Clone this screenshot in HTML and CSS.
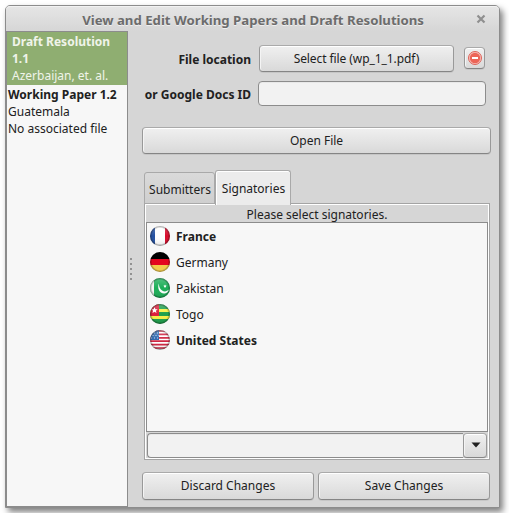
FILE: index.html
```html
<!DOCTYPE html>
<html lang="en">
<head>
<meta charset="utf-8">
<title>View and Edit Working Papers and Draft Resolutions</title>
<link rel="stylesheet" href="styles.css">
</head>
<body>
<div class="window">
  <header class="titlebar">
    <h1>View and Edit Working Papers and Draft Resolutions</h1>
    <svg class="close" viewBox="0 0 10 10"><path d="M1.5 1.5l7 7M8.5 1.5l-7 7"/></svg>
  </header>
  <div class="content">
    <aside class="papers">
      <div class="paper selected"><b>Draft Resolution<br>1.1</b><br>Azerbaijan, et. al.</div>
      <div class="paper"><b>Working Paper 1.2</b><br>Guatemala<br>No associated file</div>
    </aside>
    <div class="handle"><i></i><i></i><i></i><i></i><i></i></div>
    <main class="editor">
      <div class="row file-row">
        <label>File location</label>
        <button class="btn file-btn">Select file (wp_1_1.pdf)</button>
        <button class="btn remove-btn"><svg viewBox="0 0 14 14"><circle cx="7" cy="7" r="6.500" fill="#f8c3bd" stroke="#dd6258"/><circle cx="7" cy="7" r="5.200" fill="#ec6558"/><path d="M4 7h6" stroke="#fff" stroke-width="2"/></svg></button>
      </div>
      <div class="row docs-row">
        <label>or Google Docs ID</label>
        <input class="entry docs-entry" type="text">
      </div>
      <button class="btn open-btn">Open File</button>
      <div class="tabs">
        <div class="tab">Submitters</div>
        <div class="tab active">Signatories</div>
      </div>
      <section class="pane">
        <div class="hint">Please select signatories.</div>
        <ul class="countries">
          <li class="strong">
            <svg class="flag" viewBox="0 0 22 22">
              <defs>
                <clipPath id="round"><circle cx="11" cy="11" r="10"/></clipPath>
                <linearGradient id="gloss" x1="0" y1="0" x2="0" y2="1"><stop offset="0" stop-color="#fff" stop-opacity=".25"/><stop offset=".5" stop-color="#fff" stop-opacity="0"/><stop offset="1" stop-color="#000" stop-opacity=".12"/></linearGradient>
                <radialGradient id="rim"><stop offset=".78" stop-color="#000" stop-opacity="0"/><stop offset="1" stop-color="#000" stop-opacity=".4"/></radialGradient>
                <g id="shade"><circle cx="11" cy="11" r="10" fill="url(#gloss)"/><circle cx="11" cy="11" r="10" fill="url(#rim)"/></g>
              </defs>
              <g clip-path="url(#round)"><path fill="#fff" d="M0 0h22v22H0z"/><path fill="#2450a0" d="M0 0h6v22H0z"/><path fill="#d80c2c" d="M16 0h6v22h-6z"/></g><use href="#shade"/>
            </svg>France</li>
          <li>
            <svg class="flag" viewBox="0 0 22 22"><g clip-path="url(#round)"><path d="M0 0h22v8H0z"/><path fill="#e4061f" d="M0 8h22v6H0z"/><path fill="#f2cb4c" d="M0 14h22v8H0z"/></g><circle cx="11" cy="11" r="10" fill="url(#rim)"/></svg>Germany</li>
          <li>
            <svg class="flag" viewBox="0 0 22 22"><g clip-path="url(#round)"><path fill="#1cae57" d="M0 0h22v22H0z"/><path fill="#f4f6f4" d="M0 0h5v22H0z"/><path d="M10 6.500C7.800 10.500 10.500 17 15.500 16.600c2.500-.2 4-1.800 4.400-4-2 2-4.600 2.400-6.800.9-2.200-1.500-3.300-4-3.100-7z" fill="#fff"/><path d="m16 7.500.5 1.100 1.200.1-.9.800.3 1.200-1.100-.6-1.100.6.300-1.200-.9-.8 1.200-.1z" fill="#fff"/></g><use href="#shade"/></svg>Pakistan</li>
          <li>
            <svg class="flag" viewBox="0 0 22 22"><g clip-path="url(#round)"><path fill="#1da04b" d="M0 0h22v22H0z"/><path fill="#f8f044" d="M0 6h22v3H0zM0 13h22v3H0z"/><path fill="#dc1f3c" d="M0 0h10v13H0z"/><path fill="#fff" d="m5.500 4 .9 2.200 2.300.1-1.800 1.500.6 2.300-2-1.300-2 1.300.6-2.300-1.800-1.500 2.300-.1z"/></g><use href="#shade"/></svg>Togo</li>
          <li class="strong">
            <svg class="flag" viewBox="0 0 22 22"><g clip-path="url(#round)"><path fill="#fff" d="M0 0h22v22H0z"/><path stroke="#cf2440" stroke-width="1.700" d="M0 2h22M0 5.400h22M0 8.800h22M0 12.200h22M0 15.600h22M0 19h22"/><path fill="#2f68ae" d="M0 0h10v11H0z"/><path stroke="#c5d8ee" stroke-dasharray="1 2" d="M2 4h8M3.500 6.500H10M2 9h8"/></g><use href="#shade"/></svg>United States</li>
        </ul>
        <div class="combo">
          <input class="entry combo-entry" type="text">
          <button class="btn combo-btn"><svg viewBox="0 0 10 6"><path d="M.5.500h9L5 5.500z" fill="#222"/></svg></button>
        </div>
      </section>
      <footer class="actions">
        <button class="btn">Discard Changes</button>
        <button class="btn">Save Changes</button>
      </footer>
    </main>
  </div>
</div>
</body>
</html>
```
FILE: styles.css
```css
* { box-sizing: border-box; }
body {
  margin: 0;
  padding: 5px;
  background: #fff;
  overflow: hidden;
  color: #212121;
  font: 12px/17px "Noto Sans", "Open Sans", sans-serif;
}
.window {
  width: 495px;
  height: 503px;
  display: flex;
  flex-direction: column;
  border: 1px solid #8c8c8c;
  border-radius: 5px 5px 0 0;
  background: #d6d6d6;
  box-shadow: 3px 4px 6px rgba(0, 0, 0, .5);
}
.titlebar {
  height: 25px;
  flex: none;
  display: flex;
  align-items: center;
  justify-content: flex-end;
  padding: 1px 13px 0 0;
  border-top: 1px solid #f2f2f2;
  border-radius: 4px 4px 0 0;
  background: linear-gradient(#e5e5e5, #d6d6d6);
}
h1 {
  margin: 0 52px 0 0;
  font-size: 13.200px;
  line-height: 18px;
  color: #6c6c6c;
  text-shadow: 0 1px #efefef;
  white-space: nowrap;
}
.close { width: 10px; height: 10px; margin-top: -2px; fill: none; stroke: #8f8f8f; stroke-width: 2.200; }
.content { flex: 1; display: flex; min-height: 0; }
.papers {
  width: 122px;
  border: 1px solid #8c8c8c;
  background: #f7f7f7;
}
.paper { padding: 1px 0 0 1px; white-space: nowrap; }
.paper.selected { height: 53px; padding: 1px 0 0 5px; background: #8fae71; color: #f0f4ea; }
.handle {
  width: 6px;
  display: flex;
  flex-direction: column;
  align-items: center;
  justify-content: center;
  gap: 3px;
}
.handle i { width: 2px; height: 2px; background: #929292; }
.editor { flex: 1; padding: 14px 8px 0 8px; display: flex; flex-direction: column; }
.row { display: flex; align-items: center; }
.row label { width: 109px; padding-top: 1px; text-align: right; font-weight: bold; white-space: nowrap; }
.btn {
  height: 28px;
  padding: 0 0 1px;
  border: 1px solid;
  border-color: #aaa #999 #858585 #999;
  border-radius: 4px;
  background: linear-gradient(#f0f0f0, #d9d9d9);
  box-shadow: inset 0 1px #fff, inset 1px 0 #f4f4f4, 0 1px rgba(0, 0, 0, .07);
  color: #212121;
  font: inherit;
  text-align: center;
}
.file-row { height: 27px; }
.file-btn { width: 195px; height: 27px; margin-left: 8px; padding: 0; letter-spacing: -.080px; }
.remove-btn { width: 21px; height: 22px; margin: -1px 0 0 10px; padding: 0; display: flex; align-items: center; justify-content: center; }
.remove-btn svg { width: 14px; height: 14px; }
.docs-row { height: 25px; margin-top: 9px; }
.entry {
  min-width: 0;
  padding: 0 5px;
  border: 1px solid #8c8c8c;
  border-radius: 4px;
  background: #f2f2f2;
  box-shadow: inset 0 1px #e8e8e8;
  font: inherit;
  outline: 0;
}
.docs-entry { width: 228px; height: 25px; margin-left: 7px; }
.open-btn { margin: 21px 0 0; height: 27px; flex: none; }
.tabs { height: 34px; margin: 16px 0 -1px 2px; display: flex; align-items: flex-end; position: relative; }
.tab {
  width: 71px;
  height: 32px;
  padding: 8px 0 0 1px;
  border: 1px solid #a9a9a9;
  border-radius: 3px 3px 0 0;
  background: linear-gradient(#dadada, #cfcfcf);
  text-align: center;
}
.tab.active {
  width: 76px;
  height: 35px;
  margin-bottom: -1px;
  padding: 9px 0 0 1px;
  border-bottom: 0;
  background: #ececec;
  box-shadow: inset 0 1px #fff, inset 1px 0 #fff;
}
.pane {
  width: 346px;
  height: 257px;
  margin-left: 2px;
  padding: 0 1px;
  border: 1px solid #a4a4a4;
  box-shadow: inset 1px 1px #fff, inset -1px -1px #fff;
}
.hint { height: 18px; padding-top: 2px; text-align: center; }
.countries {
  height: 210px;
  margin: 0;
  padding: 0 0 0 3px;
  border: 1px solid #8c8c8c;
  background: #f7f7f7;
  list-style: none;
}
.countries li { height: 26px; display: flex; align-items: center; gap: 5px; }
.countries .strong { font-weight: bold; }
.flag { width: 22px; height: 22px; margin-left: -1px; }
.combo { display: flex; height: 25px; margin-top: 1px; padding: 0 1px; }
.combo-entry { flex: 1; border-radius: 4px 0 0 4px; border-right: 0; }
.combo-btn { width: 24px; height: 25px; padding: 0 0 1px 1px; display: flex; align-items: center; justify-content: center; }
.combo-btn svg { width: 10px; height: 6px; }
.actions { display: flex; gap: 4px; margin-top: 12px; padding-right: 1px; }
.actions .btn { flex: 1; }
```
